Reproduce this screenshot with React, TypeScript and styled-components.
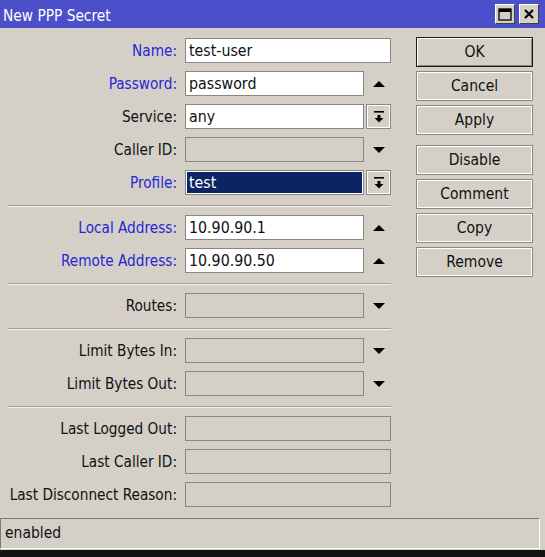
import React from 'react'
import styled, { createGlobalStyle } from 'styled-components'

const uiFont = `'DejaVu Sans Condensed', 'Liberation Sans', Arial, sans-serif`

const GlobalStyle = createGlobalStyle`
  html, body {
    margin: 0;
    padding: 0;
    background: #141414;
  }
  body {
    font-family: ${uiFont};
  }
`

const Window = styled.div`
  width: 545px;
  height: 550px;
  display: flex;
  flex-direction: column;
  background: #d4d0c8;
  color: #000;
`

const TitleBar = styled.div`
  height: 28px;
  flex-shrink: 0;
  display: flex;
  align-items: center;
  justify-content: space-between;
  background: #4b4fc9;
  padding-left: 3px;
`

const Title = styled.span`
  color: #ffffff;
  font-size: 15.3px;
  padding-top: 3px;
`

const TitleControls = styled.div`
  display: flex;
  gap: 4px;
  padding-right: 6px;
`

const TitleButton = styled.div`
  width: 20px;
  height: 20px;
  box-sizing: border-box;
  background: #d4d0c8;
  border: 1px solid;
  border-color: #ffffff #404040 #404040 #ffffff;
  display: flex;
  align-items: center;
  justify-content: center;
`

const Body = styled.div`
  display: flex;
  padding-top: 9px;
`

const Form = styled.div`
  width: 391px;
  display: flex;
  flex-direction: column;
  gap: 8px;
  padding-top: 1px;
`

const Row = styled.div`
  display: grid;
  grid-template-columns: 177px 206px;
  column-gap: 8px;
  height: 25px;
  align-items: center;
`

const Label = styled.label<{ $accent?: boolean }>`
  text-align: right;
  font-size: 15.2px;
  white-space: nowrap;
  color: ${(p) => (p.$accent ? '#2626d4' : '#111111')};
`

const FieldLine = styled.div`
  display: flex;
  align-items: center;
  gap: 2px;
  height: 25px;
`

const Field = styled.div<{ $kind: 'text' | 'empty' | 'selected'; $short?: boolean }>`
  box-sizing: border-box;
  width: ${(p) => (p.$short ? '179px' : '206px')};
  height: 25px;
  border: 1px solid #8a8780;
  box-shadow: ${(p) => (p.$kind === 'selected' ? 'inset 0 0 0 1px #ffffff' : 'none')};
  background: ${(p) =>
    p.$kind === 'text' ? '#ffffff' : p.$kind === 'selected' ? '#0c2464' : '#d4d0c8'};
  color: ${(p) => (p.$kind === 'selected' ? '#ffffff' : '#111111')};
  font-size: 15.8px;
  line-height: 24px;
  padding-left: 3px;
  white-space: nowrap;
  overflow: hidden;
`

const ArrowSlot = styled.div`
  width: 25px;
  height: 25px;
  display: flex;
  align-items: center;
  justify-content: center;
`

const DropButton = styled.div`
  box-sizing: border-box;
  width: 25px;
  height: 25px;
  border: 1px solid #8a8780;
  box-shadow: inset 1px 1px 0 #ffffff, inset -1px -1px 0 #ffffff;
  display: flex;
  align-items: center;
  justify-content: center;
`

const Separator = styled.div`
  margin: 2px 0 0 8px;
  width: 383px;
  border-top: 1px solid #a19d95;
  border-bottom: 1px solid #f4f2ee;
`

const Actions = styled.div`
  margin-left: 25px;
  width: 117px;
  display: flex;
  flex-direction: column;
  gap: 4px;
`

const ActionButton = styled.button<{ $default?: boolean; $spaced?: boolean }>`
  box-sizing: border-box;
  height: 30px;
  width: 117px;
  margin: ${(p) => (p.$spaced ? '6px 0 0' : '0')};
  padding: 0;
  background: #d4d0c8;
  font-family: ${uiFont};
  font-size: 15.5px;
  color: #111111;
  border: 1px solid ${(p) => (p.$default ? '#1a1a1a' : '#8a8780')};
  box-shadow: ${(p) =>
    p.$default
      ? 'inset 1px 1px 0 #ffffff, inset -1px -1px 0 #8a8780'
      : 'inset 1px 1px 0 #ffffff, inset -1px -1px 0 #ffffff'};
`

const StatusBar = styled.div`
  margin-top: 11px;
  box-sizing: border-box;
  width: 540px;
  height: 31px;
  border: 1px solid;
  border-color: #7e7b75 #ffffff #ffffff #7e7b75;
  font-size: 15.5px;
  line-height: 29px;
  padding-left: 4px;
  color: #111111;
`

const UpArrow = () => (
  <svg width="14" height="8" viewBox="0 0 14 8">
    <path d="M7 1 L13 7 L1 7 Z" fill="#000" />
  </svg>
)

const DownArrow = () => (
  <svg width="14" height="8" viewBox="0 0 14 8">
    <path d="M1 1 L13 1 L7 7 Z" fill="#000" />
  </svg>
)

const DropIcon = () => (
  <svg width="12" height="14" viewBox="0 0 12 14">
    <rect x="1" y="1" width="10" height="1.6" fill="#000" />
    <rect x="4.5" y="5" width="3" height="3" fill="#000" />
    <path d="M1.5 8 L10.5 8 L6 12.5 Z" fill="#000" />
  </svg>
)

type Extra = 'up' | 'down' | 'drop' | undefined

type FieldRow = {
  label: string
  value?: string
  accent?: boolean
  kind: 'text' | 'empty' | 'selected'
  extra?: Extra
  full?: boolean
}

const groups: FieldRow[][] = [
  [
    { label: 'Name:', value: 'test-user', accent: true, kind: 'text', full: true },
    { label: 'Password:', value: 'password', accent: true, kind: 'text', extra: 'up' },
    { label: 'Service:', value: 'any', kind: 'text', extra: 'drop' },
    { label: 'Caller ID:', kind: 'empty', extra: 'down' },
    { label: 'Profile:', value: 'test', accent: true, kind: 'selected', extra: 'drop' },
  ],
  [
    { label: 'Local Address:', value: '10.90.90.1', accent: true, kind: 'text', extra: 'up' },
    { label: 'Remote Address:', value: '10.90.90.50', accent: true, kind: 'text', extra: 'up' },
  ],
  [{ label: 'Routes:', kind: 'empty', extra: 'down' }],
  [
    { label: 'Limit Bytes In:', kind: 'empty', extra: 'down' },
    { label: 'Limit Bytes Out:', kind: 'empty', extra: 'down' },
  ],
  [
    { label: 'Last Logged Out:', kind: 'empty', full: true },
    { label: 'Last Caller ID:', kind: 'empty', full: true },
    { label: 'Last Disconnect Reason:', kind: 'empty', full: true },
  ],
]

const renderExtra = (extra: Extra) => {
  if (extra === 'drop')
    return (
      <DropButton>
        <DropIcon />
      </DropButton>
    )
  return <ArrowSlot>{extra === 'up' ? <UpArrow /> : <DownArrow />}</ArrowSlot>
}

const actions = ['OK', 'Cancel', 'Apply', 'Disable', 'Comment', 'Copy', 'Remove']

const App: React.FC = () => {
  return (
    <>
      <GlobalStyle />
      <Window>
        <TitleBar>
          <Title>New PPP Secret</Title>
          <TitleControls>
            <TitleButton>
              <svg width="14" height="13" viewBox="0 0 14 13">
                <rect x="1" y="1" width="12" height="11" fill="none" stroke="#000" strokeWidth="1.3" />
                <rect x="1" y="1" width="12" height="3" fill="#000" />
              </svg>
            </TitleButton>
            <TitleButton>
              <svg width="12" height="12" viewBox="0 0 12 12">
                <path d="M2 2 L10 10 M10 2 L2 10" stroke="#000" strokeWidth="2.2" />
              </svg>
            </TitleButton>
          </TitleControls>
        </TitleBar>

        <Body>
          <Form>
            {groups.map((group, gi) => (
              <React.Fragment key={gi}>
                {gi > 0 && <Separator />}
                {group.map((row) => (
                  <Row key={row.label}>
                    <Label $accent={row.accent}>{row.label}</Label>
                    <FieldLine>
                      <Field $kind={row.kind} $short={!row.full}>
                        {row.value}
                      </Field>
                      {!row.full && renderExtra(row.extra)}
                    </FieldLine>
                  </Row>
                ))}
              </React.Fragment>
            ))}
          </Form>

          <Actions>
            {actions.map((name) => (
              <ActionButton key={name} $default={name === 'OK'} $spaced={name === 'Disable'}>
                {name}
              </ActionButton>
            ))}
          </Actions>
        </Body>

        <StatusBar>enabled</StatusBar>
      </Window>
    </>
  )
}

export default App
